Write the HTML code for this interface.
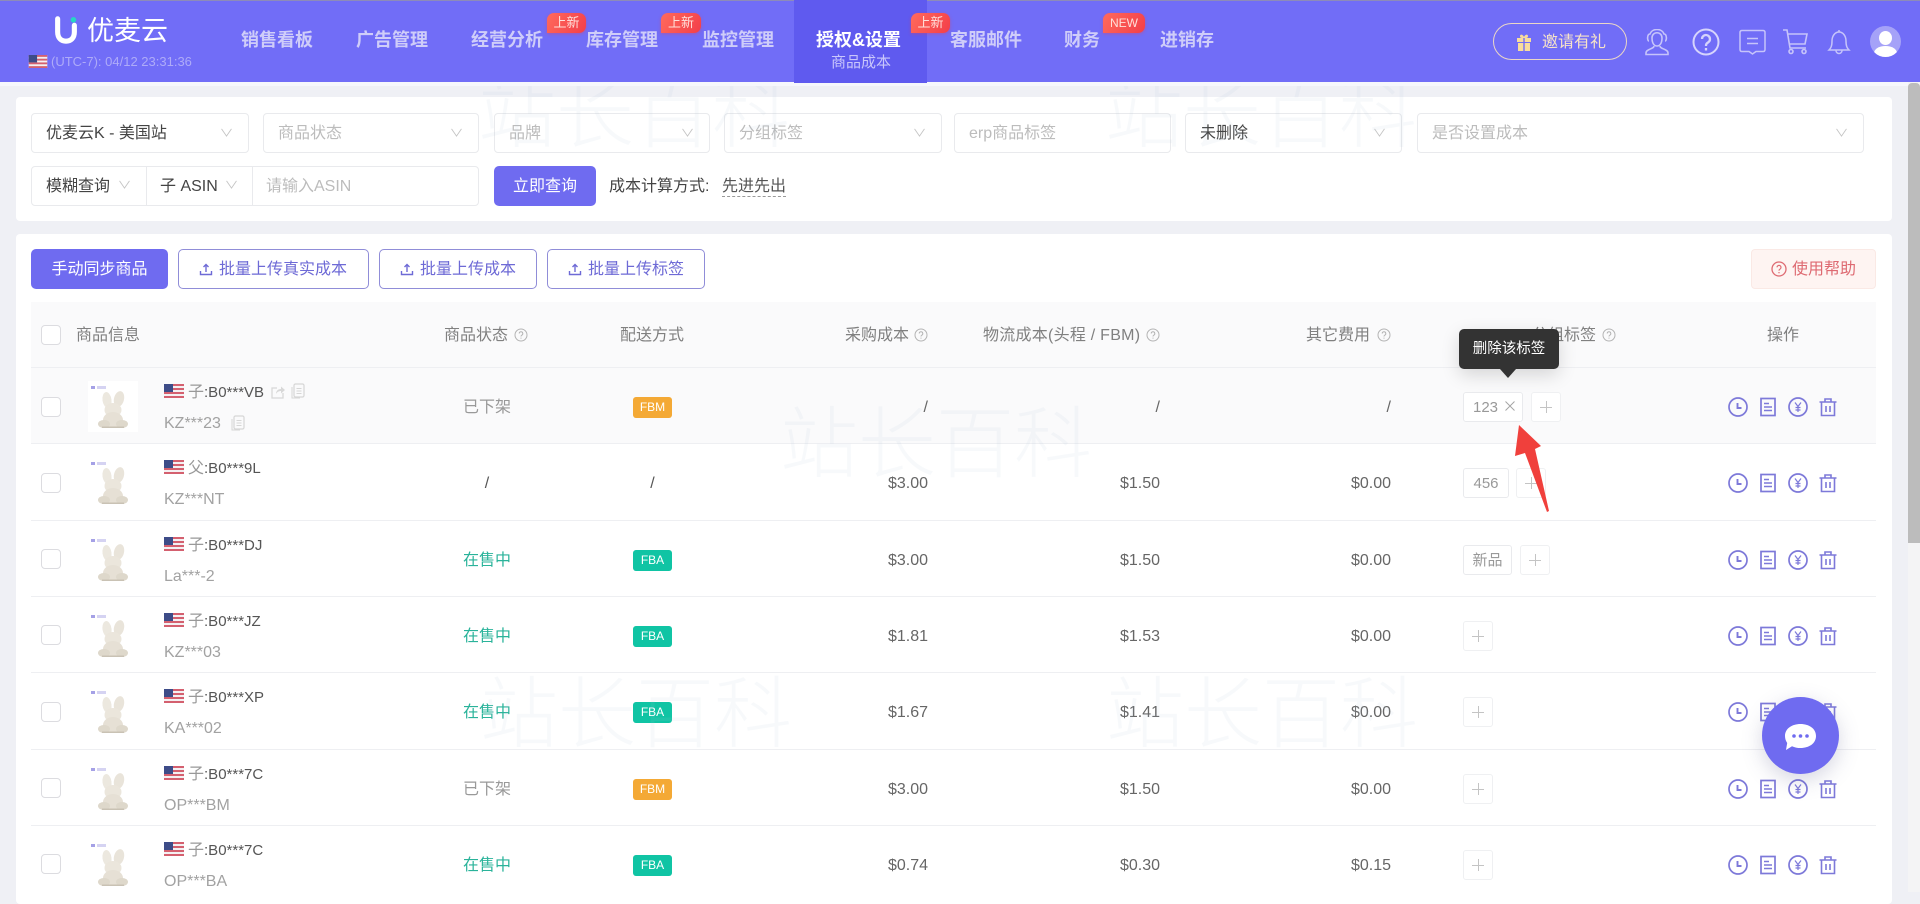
<!DOCTYPE html>
<html lang="zh-CN"><head><meta charset="utf-8"><title>优麦云 商品成本</title>
<style>
*{box-sizing:border-box;margin:0;padding:0}
html,body{width:1920px;height:892px;overflow:hidden;background:#eff0f5;font-family:"Liberation Sans","Noto Sans CJK SC",sans-serif;font-size:16px;color:#555}
.abs,.t,.s,.r,.r>*{position:absolute}
.t{white-space:nowrap;line-height:24px;height:24px}
#hd{position:absolute;left:0;top:0;width:1920px;height:82px;background:#716df7;border-top:1px solid #8d8bb8;z-index:5}
#hdx{position:absolute;left:0;top:82px;width:1920px;height:4px;background:#f6f7fc;z-index:4}
.nv{position:absolute;top:27px;line-height:24px;font-size:18px;font-weight:700;color:#cfcdf9;white-space:nowrap}
.bd{position:absolute;top:12px;height:20px;line-height:20px;text-align:center;color:#ffe0da;font-size:13px;background:linear-gradient(120deg,#ff6a5c,#f33e49);border-radius:7px 7px 7px 0;box-shadow:0 1px 3px rgba(240,60,70,.4)}
.card{position:absolute;background:#fff;left:16px;width:1876px;border-radius:4px}
.s{height:40px;top:113px;background:#fff;border:1px solid #e9eaed;border-radius:4px;line-height:40px;padding-left:14px;color:#bcbcbc;white-space:nowrap}
.s.v{color:#444}
.s svg,.chev{position:absolute;width:13px;height:9px;right:15px;top:14px}
.btn{position:absolute;top:249px;height:40px;border:1px solid #908dd8;border-radius:5px;background:#fff;color:#6e6ad6;line-height:40px;white-space:nowrap;padding-left:40px}
.btn svg{position:absolute;left:20px;top:12px;width:14px;height:14px}
.r{left:31px;width:1845px;height:76px;border-bottom:1px solid #eeeff2}
.r.h{background:#fafafb}
.cb{left:10px;top:29px;width:20px;height:20px;border:1px solid #dcdce0;border-radius:4px;background:#fff}
.img{left:57px;top:13px;width:50px;height:51px;background:#fff}
.r:not(.h) .img{background:transparent}
.fl{left:133px;top:16px;width:20px;height:14px}
.a{left:157px;top:13px;line-height:24px;white-space:nowrap;color:#555;font-size:15px}
.a b{font-weight:400;color:#999;font-size:16px}
.b{left:133px;top:44px;line-height:24px;white-space:nowrap;color:#a2a2a2;font-size:16px}
.st{left:406px;width:100px;top:28px;line-height:24px;text-align:center;color:#999}
.st.g{color:#2ab39a}
.st.n{color:#555}
.bg{left:602px;top:29px;width:39px;height:21px;line-height:21px;text-align:center;color:#fff;font-size:12px;border-radius:3px}
.fba{background:#10c4a4}.fbm{background:#f4a935}
.sl{left:602px;width:39px;top:28px;line-height:24px;text-align:center;color:#555}
.p{top:28px;width:200px;line-height:24px;text-align:right;color:#666}
.p1{left:697px}.p2{left:929px}.p3{left:1160px}
.tg{top:24px;height:30px;line-height:29px;border:1px solid #e9eaed;border-radius:3px;background:#fff;color:#999;font-size:15px;text-align:center}
.pl{top:24px;width:30px;height:30px;border:1px solid #eff0f2;border-radius:3px;background:#fff}
.pl:before{content:"";position:absolute;left:8px;top:13.5px;width:12px;height:1px;background:#c4c4c4}
.pl:after{content:"";position:absolute;left:13.5px;top:8px;width:1px;height:12px;background:#c4c4c4}
.ic{top:29px;width:20px;height:20px}
.i1{left:1697px}.i2{left:1727px}.i3{left:1757px}.i4{left:1787px}
.th{color:#808080;top:324px!important}
.q{position:absolute;width:14px;height:14px;top:328px}
.wm{position:absolute;font-family:"Noto Sans CJK SC","WenQuanYi Zen Hei",sans-serif;font-weight:300;font-size:78px;line-height:80px;height:80px;width:320px;letter-spacing:0;color:rgba(175,198,215,.10);white-space:nowrap;z-index:3;pointer-events:none}
</style></head><body>
<svg width="0" height="0" style="position:absolute"><defs>
<symbol id="flag" viewBox="0 0 20 14"><rect width="20" height="14" fill="#f4f0f2"/><rect y="0" width="20" height="2" fill="#d4606f"/><rect y="4" width="20" height="2" fill="#d4606f"/><rect y="8" width="20" height="2" fill="#d4606f"/><rect y="12" width="20" height="2" fill="#d4606f"/><rect width="9" height="8" fill="#3d4c88"/></symbol>
<symbol id="bun" viewBox="0 0 50 51"><rect x="3" y="5" width="4" height="3" fill="#a5a1e6"/><rect x="9" y="5" width="9" height="3" fill="#d5d3f2"/><ellipse cx="19" cy="19" rx="4.500" ry="8" fill="#ece8df" transform="rotate(-8 19 19)"/><ellipse cx="31" cy="18" rx="5" ry="8" fill="#e9e4da" transform="rotate(14 31 18)"/><ellipse cx="25" cy="29" rx="8.500" ry="7" fill="#ebe6dc"/><ellipse cx="25" cy="39" rx="10" ry="8" fill="#e6e0d5"/><ellipse cx="16" cy="43" rx="6" ry="4" fill="#ded8cb"/><ellipse cx="34" cy="43" rx="6" ry="4" fill="#ded8cb"/><rect x="14" y="45.500" width="22" height="1.500" fill="#c9c2b4"/></symbol>
<symbol id="clk" viewBox="0 0 20 20"><circle cx="10" cy="10" r="9" fill="none" stroke="#7d79d9" stroke-width="1.700"/><path d="M9.500 6v5h4" fill="none" stroke="#7d79d9" stroke-width="1.900"/></symbol>
<symbol id="doc" viewBox="0 0 20 20"><rect x="3" y="1.500" width="14" height="17" fill="none" stroke="#7d79d9" stroke-width="1.700"/><path d="M6 6.500h5M6 10h8M6 13.500h8" fill="none" stroke="#7d79d9" stroke-width="1.400"/></symbol>
<symbol id="yen" viewBox="0 0 20 20"><circle cx="10" cy="10" r="9" fill="none" stroke="#7d79d9" stroke-width="1.700"/><path d="M7 5.500L10 9.500l3-4M10 9.500V15M7.500 10.500h5M7.500 13h5" fill="none" stroke="#7d79d9" stroke-width="1.200"/></symbol>
<symbol id="tr" viewBox="0 0 20 20"><path d="M1.500 5h17M7 5V2h6V5M3.500 5v13.500h13V5M8 9v6M12 9v6" fill="none" stroke="#7d79d9" stroke-width="1.600"/></symbol>
<symbol id="qm" viewBox="0 0 14 14"><circle cx="7" cy="7" r="6" fill="none" stroke="#b4b4b4" stroke-width="1"/><path d="M5.200 5.500a1.800 1.800 0 1 1 2.600 1.700c-.6.300-.8.600-.8 1.300M7 9.600v1" fill="none" stroke="#b4b4b4" stroke-width="1"/></symbol>
<symbol id="ch" viewBox="0 0 14 10"><path d="M1.500 1L7 9l5.500-8" fill="none" stroke="#c4c4c4" stroke-width="1"/></symbol>
<symbol id="up" viewBox="0 0 14 14"><path d="M1.500 9v3.500h11V9M7 10V2.500M4.500 5L7 2.500 9.500 5" fill="none" stroke="#6e6ad6" stroke-width="1.400"/></symbol>
<symbol id="cp" viewBox="0 0 16 16"><rect x="4" y="1" width="10" height="13" rx="1.500" fill="none" stroke="#d6d6d6" stroke-width="1.200"/><path d="M2 4v11h8M6.500 5.500h5M6.500 8h5M6.500 10.500h5" fill="none" stroke="#d6d6d6" stroke-width="1"/></symbol>
</defs></svg>

<!-- header -->
<div id="hd">
<svg class="abs" style="left:53px;top:14px;width:26px;height:30px" viewBox="0 0 28 30"><path d="M5 3v14c0 7 4 10 9 10s9-3 9-10V10" fill="none" stroke="#fff" stroke-width="5.500" stroke-linecap="round"/><circle cx="22" cy="4" r="3" fill="#25d6c3"/></svg>
<div class="abs" style="left:87px;top:12px;font-size:27px;line-height:36px;color:#fff;white-space:nowrap">优麦云</div>
<svg class="abs" style="left:28px;top:54px;width:20px;height:13px"><use href="#flag"/></svg>
<div class="abs" style="left:51px;top:52px;font-size:13px;line-height:18px;color:#aeabf8;white-space:nowrap">(UTC-7): 04/12 23:31:36</div>
<div class="abs" style="left:794px;top:-1px;width:133px;height:83px;background:#5f5aef"></div>
<span class="nv" style="left:241px">销售看板</span>
<span class="nv" style="left:356px">广告管理</span>
<span class="nv" style="left:471px">经营分析</span>
<span class="nv" style="left:586px">库存管理</span>
<span class="nv" style="left:702px">监控管理</span>
<span class="nv" style="left:816px;color:#fff;font-weight:700">授权&amp;设置</span>
<span class="abs" style="left:831px;top:51px;font-size:15px;line-height:22px;color:#c9c6fb;white-space:nowrap">商品成本</span>
<span class="nv" style="left:950px">客服邮件</span>
<span class="nv" style="left:1064px">财务</span>
<span class="nv" style="left:1160px">进销存</span>
<span class="bd" style="left:547px;width:39px">上新</span>
<span class="bd" style="left:661px;width:40px">上新</span>
<span class="bd" style="left:911px;width:39px">上新</span>
<span class="bd" style="left:1103px;width:42px;font-size:12px">NEW</span>
<div class="abs" style="left:1493px;top:22px;width:134px;height:37px;border:1px solid #ebd7c6;border-radius:19px"></div>
<svg class="abs" style="left:1515px;top:32px;width:18px;height:18px" viewBox="0 0 18 18"><path d="M5 3.500c0-3 3-2 4 .5 1-2.500 4-3.500 4-.5 0 1-1 1.500-2 1.500H7C6 5 5 4.500 5 3.500z" fill="#f8dc9c"/><rect x="2" y="5" width="14" height="4" fill="#f8dc9c"/><rect x="3" y="10" width="12" height="8" fill="#f8dc9c"/><rect x="8.300" y="5" width="1.400" height="13" fill="#716df7"/></svg>
<span class="abs" style="left:1542px;top:30px;font-size:16px;line-height:24px;color:#f7e3c8;white-space:nowrap">邀请有礼</span>
<svg class="abs" style="left:1644px;top:28px;width:26px;height:27px" viewBox="0 0 26 27" fill="none" stroke="#c6c4fa" stroke-width="1.600"><path d="M5 12c-2 0-2-7 1-7 2-6 12-6 14 0 3 0 3 7 1 7"/><path d="M8 9c0-7 10-7 10 0 0 5-2 8-5 8s-5-3-5-8z"/><path d="M10 17c0 3-8 3-8 7v1.500h22V24c0-4-8-4-8-7"/></svg>
<svg class="abs" style="left:1692px;top:27px;width:28px;height:28px" viewBox="0 0 28 28" fill="none" stroke="#d6d4fc" stroke-width="2"><circle cx="14" cy="14" r="12.500"/><path d="M10 11a4 4 0 1 1 6 3.500c-1.500 1-2 1.500-2 3.500M14 20v2.500" stroke-width="2.300"/></svg>
<svg class="abs" style="left:1739px;top:28px;width:27px;height:26px" viewBox="0 0 27 26" fill="none" stroke="#c6c4fa" stroke-width="1.500"><path d="M3 1.500h21q2 0 2 2v17q0 2-2 2h-7l-3.500 2.500-3.500-2.500H3q-2 0-2-2v-17q0-2 2-2z"/><path d="M8 9.500h11M8 14.500h11"/></svg>
<svg class="abs" style="left:1782px;top:27px;width:27px;height:27px" viewBox="0 0 27 27" fill="none" stroke="#c6c4fa" stroke-width="1.600"><path d="M1 2h4l3 18h16M6 6h19l-2 10H7.500"/><circle cx="9" cy="23.500" r="2"/><circle cx="22" cy="23.500" r="2"/></svg>
<svg class="abs" style="left:1827px;top:28px;width:24px;height:26px" viewBox="0 0 24 26" fill="none" stroke="#c6c4fa" stroke-width="1.500"><path d="M2 21c2-2 3-4 3-9 0-5 3-9 7-9s7 4 7 9c0 5 1 7 3 9z"/><path d="M9 21.500a3 3 0 0 0 6 0M12 1v2"/></svg>
<div class="abs" style="left:1870px;top:25px;width:31px;height:31px;border-radius:50%;background:#a5a2f8;overflow:hidden"><div class="abs" style="left:9px;top:5px;width:13px;height:14px;border-radius:50%;background:#fff"></div><div class="abs" style="left:4px;top:20px;width:23px;height:14px;border-radius:50%;background:#fff"></div></div>
</div>
<div id="hdx"></div>

<!-- watermarks -->
<div class="wm" style="left:478px;top:68px">站长百科</div>
<div class="wm" style="left:1105px;top:68px">站长百科</div>
<div class="wm" style="left:780px;top:398px">站长百科</div>
<div class="wm" style="left:480px;top:668px">站长百科</div>
<div class="wm" style="left:1106px;top:668px">站长百科</div>

<!-- filter card -->
<div class="card" style="top:97px;height:124px"></div>
<div class="s v" style="left:31px;width:218px">优麦云K - 美国站<svg><use href="#ch"/></svg></div>
<div class="s" style="left:263px;width:216px">商品状态<svg><use href="#ch"/></svg></div>
<div class="s" style="left:494px;width:216px">品牌<svg><use href="#ch"/></svg></div>
<div class="s" style="left:724px;width:218px">分组标签<svg><use href="#ch"/></svg></div>
<div class="s" style="left:954px;width:217px">erp商品标签</div>
<div class="s v" style="left:1185px;width:217px">未删除<svg><use href="#ch"/></svg></div>
<div class="s" style="left:1417px;width:447px">是否设置成本<svg><use href="#ch"/></svg></div>
<div class="s v" style="left:31px;width:448px;top:166px"></div>
<span class="t" style="left:46px;top:175px;color:#444">模糊查询</span>
<svg class="chev" style="left:118px;top:180px;right:auto"><use href="#ch"/></svg>
<div class="abs" style="left:146px;top:166px;width:1px;height:40px;background:#e9eaed"></div>
<span class="t" style="left:160px;top:175px;color:#444">子 ASIN</span>
<svg class="chev" style="left:225px;top:180px;right:auto"><use href="#ch"/></svg>
<div class="abs" style="left:252px;top:166px;width:1px;height:40px;background:#e9eaed"></div>
<span class="t" style="left:266px;top:175px;color:#bcbcbc">请输入ASIN</span>
<div class="abs" style="left:494px;top:166px;width:102px;height:40px;border-radius:5px;background:#6f6bf0;color:#fff;line-height:41px;text-align:center">立即查询</div>
<span class="t" style="left:609px;top:175px;color:#444">成本计算方式:</span>
<span class="t" style="left:722px;top:175px;color:#555;height:22px;border-bottom:1px dashed #999">先进先出</span>

<!-- table card -->
<div class="card" style="top:234px;height:670px"></div>
<div class="abs" style="left:31px;top:249px;width:137px;height:40px;border-radius:5px;background:#6f6bf0;color:#fff;line-height:41px;text-align:center">手动同步商品</div>
<div class="btn" style="left:178px;width:191px"><svg><use href="#up"/></svg>批量上传真实成本</div>
<div class="btn" style="left:379px;width:158px"><svg><use href="#up"/></svg>批量上传成本</div>
<div class="btn" style="left:547px;width:158px"><svg><use href="#up"/></svg>批量上传标签</div>
<div class="abs" style="left:1751px;top:249px;width:125px;height:40px;border-radius:4px;background:#fef4f2;border:1px solid #fae9e5;color:#de6a72;line-height:39px;padding-left:40px;white-space:nowrap;font-size:16px"><svg class="abs" style="left:19px;top:11px;width:16px;height:16px" viewBox="0 0 16 16"><circle cx="8" cy="8" r="7" fill="none" stroke="#de6a72" stroke-width="1.300"/><path d="M6 6.300a2 2 0 1 1 3 1.800c-.8.400-1 .8-1 1.500M8 11v1.300" fill="none" stroke="#de6a72" stroke-width="1.200"/></svg>使用帮助</div>

<!-- table head -->
<div class="abs" style="left:31px;top:302px;width:1845px;height:66px;background:#fafafb;border-bottom:1px solid #eeeff2"></div>
<div class="abs" style="left:41px;top:325px;width:20px;height:20px;border:1px solid #dcdce0;border-radius:4px;background:#fff"></div>
<span class="t th" style="left:76px">商品信息</span>
<span class="t th" style="left:444px">商品状态</span><svg class="q" style="left:514px"><use href="#qm"/></svg>
<span class="t th" style="left:620px">配送方式</span>
<span class="t th" style="left:845px">采购成本</span><svg class="q" style="left:914px"><use href="#qm"/></svg>
<span class="t th" style="left:983px;letter-spacing:.25px">物流成本(头程 / FBM)</span><svg class="q" style="left:1146px"><use href="#qm"/></svg>
<span class="t th" style="left:1306px">其它费用</span><svg class="q" style="left:1377px"><use href="#qm"/></svg>
<span class="t th" style="left:1532px">分组标签</span><svg class="q" style="left:1602px"><use href="#qm"/></svg>
<span class="t th" style="left:1767px">操作</span>

<!-- rows -->
<div class="r h" style="top:368px"><i class="cb"></i><svg class="img"><use href="#bun"/></svg><svg class="fl"><use href="#flag"/></svg><span class="a"><b>子</b>:B0***VB</span><span class="b">KZ***23</span>
<svg style="left:240px;top:17px;width:14px;height:14px" viewBox="0 0 14 14"><path d="M12 8v5H1V3h5" fill="none" stroke="#d8d8d8" stroke-width="1.300"/><path d="M5 9c0-3 2-5 5-5V1.500L14 5l-4 3.500V6C8 6 6 7 5 9z" fill="#d8d8d8"/></svg><svg style="left:259px;top:15px;width:16px;height:16px"><use href="#cp"/></svg><svg style="left:199px;top:47px;width:16px;height:16px"><use href="#cp"/></svg>
<span class="st">已下架</span><span class="bg fbm">FBM</span><span class="p p1">/</span><span class="p p2">/</span><span class="p p3">/</span>
<span class="tg" style="left:1432px;width:60px;text-align:left;padding-left:9px">123</span><svg style="left:1473px;top:32px;width:12px;height:12px" viewBox="0 0 12 12"><path d="M1.500 1.500l9 9M10.500 1.500l-9 9" stroke="#a5a5a5" fill="none"/></svg><span class="pl" style="left:1500px"></span>
<svg class="ic i1"><use href="#clk"/></svg><svg class="ic i2"><use href="#doc"/></svg><svg class="ic i3"><use href="#yen"/></svg><svg class="ic i4"><use href="#tr"/></svg></div>

<div class="r" style="top:444px;height:77px"><i class="cb"></i><svg class="img"><use href="#bun"/></svg><svg class="fl"><use href="#flag"/></svg><span class="a"><b>父</b>:B0***9L</span><span class="b">KZ***NT</span>
<span class="st n">/</span><span class="sl">/</span><span class="p p1">$3.00</span><span class="p p2">$1.50</span><span class="p p3">$0.00</span>
<span class="tg" style="left:1432px;width:46px">456</span><span class="pl" style="left:1485px"></span>
<svg class="ic i1"><use href="#clk"/></svg><svg class="ic i2"><use href="#doc"/></svg><svg class="ic i3"><use href="#yen"/></svg><svg class="ic i4"><use href="#tr"/></svg></div>

<div class="r" style="top:521px"><i class="cb" style="top:28px"></i><svg class="img"><use href="#bun"/></svg><svg class="fl"><use href="#flag"/></svg><span class="a"><b>子</b>:B0***DJ</span><span class="b">La***-2</span>
<span class="st g">在售中</span><span class="bg fba">FBA</span><span class="p p1">$3.00</span><span class="p p2">$1.50</span><span class="p p3">$0.00</span>
<span class="tg" style="left:1432px;width:49px">新品</span><span class="pl" style="left:1489px"></span>
<svg class="ic i1"><use href="#clk"/></svg><svg class="ic i2"><use href="#doc"/></svg><svg class="ic i3"><use href="#yen"/></svg><svg class="ic i4"><use href="#tr"/></svg></div>

<div class="r" style="top:597px"><i class="cb" style="top:28px"></i><svg class="img"><use href="#bun"/></svg><svg class="fl"><use href="#flag"/></svg><span class="a"><b>子</b>:B0***JZ</span><span class="b">KZ***03</span>
<span class="st g">在售中</span><span class="bg fba">FBA</span><span class="p p1">$1.81</span><span class="p p2">$1.53</span><span class="p p3">$0.00</span>
<span class="pl" style="left:1432px"></span>
<svg class="ic i1"><use href="#clk"/></svg><svg class="ic i2"><use href="#doc"/></svg><svg class="ic i3"><use href="#yen"/></svg><svg class="ic i4"><use href="#tr"/></svg></div>

<div class="r" style="top:673px;height:77px"><i class="cb"></i><svg class="img"><use href="#bun"/></svg><svg class="fl"><use href="#flag"/></svg><span class="a"><b>子</b>:B0***XP</span><span class="b">KA***02</span>
<span class="st g">在售中</span><span class="bg fba">FBA</span><span class="p p1">$1.67</span><span class="p p2">$1.41</span><span class="p p3">$0.00</span>
<span class="pl" style="left:1432px"></span>
<svg class="ic i1"><use href="#clk"/></svg><svg class="ic i2"><use href="#doc"/></svg><svg class="ic i3"><use href="#yen"/></svg><svg class="ic i4"><use href="#tr"/></svg></div>

<div class="r" style="top:750px"><i class="cb" style="top:28px"></i><svg class="img"><use href="#bun"/></svg><svg class="fl"><use href="#flag"/></svg><span class="a"><b>子</b>:B0***7C</span><span class="b">OP***BM</span>
<span class="st">已下架</span><span class="bg fbm">FBM</span><span class="p p1">$3.00</span><span class="p p2">$1.50</span><span class="p p3">$0.00</span>
<span class="pl" style="left:1432px"></span>
<svg class="ic i1"><use href="#clk"/></svg><svg class="ic i2"><use href="#doc"/></svg><svg class="ic i3"><use href="#yen"/></svg><svg class="ic i4"><use href="#tr"/></svg></div>

<div class="r" style="top:826px;border-bottom:0;height:66px;overflow:visible"><i class="cb" style="top:28px"></i><svg class="img"><use href="#bun"/></svg><svg class="fl"><use href="#flag"/></svg><span class="a"><b>子</b>:B0***7C</span><span class="b">OP***BA</span>
<span class="st g">在售中</span><span class="bg fba">FBA</span><span class="p p1">$0.74</span><span class="p p2">$0.30</span><span class="p p3">$0.15</span>
<span class="pl" style="left:1432px"></span>
<svg class="ic i1"><use href="#clk"/></svg><svg class="ic i2"><use href="#doc"/></svg><svg class="ic i3"><use href="#yen"/></svg><svg class="ic i4"><use href="#tr"/></svg></div>

<!-- tooltip -->
<div class="abs" style="left:1459px;top:329px;width:100px;height:40px;background:#333;border-radius:5px;color:#fff;font-size:14.500px;line-height:41px;text-align:center;box-shadow:0 6px 18px rgba(0,0,0,.15);z-index:6">删除该标签</div>
<div class="abs" style="left:1500px;top:369px;width:0;height:0;border:8px solid transparent;border-top:9px solid #333;border-bottom:0;z-index:6"></div>

<!-- red arrow -->
<svg class="abs" style="left:1500px;top:415px;width:60px;height:105px;z-index:7" viewBox="1500 415 60 105"><polygon points="1519,425 1541,446 1535,449 1549,511 1547,512 1525,453 1515,456" fill="#f0403c"/></svg>

<!-- chat -->
<div class="abs" style="left:1762px;top:697px;width:77px;height:77px;border-radius:50%;background:#6f6bf0;box-shadow:0 6px 20px rgba(90,90,140,.25);z-index:8"><svg class="abs" style="left:22px;top:26px;width:33px;height:30px" viewBox="0 0 33 30"><path d="M16.500 1C25 1 32 5.500 32 13s-7 12-15.500 12c-3 0-6-.6-8.500-1.800L2 27l1.200-7C1.800 18 1 15.500 1 13 1 5.500 8 1 16.500 1z" fill="#fff"/><circle cx="10" cy="13" r="1.800" fill="#6f6bf0"/><circle cx="16.500" cy="13" r="1.800" fill="#6f6bf0"/><circle cx="23" cy="13" r="1.800" fill="#6f6bf0"/></svg></div>

<!-- scrollbar -->
<div class="abs" style="left:1908px;top:82px;width:12px;height:810px;background:#f4f4f5;z-index:6"></div>
<div class="abs" style="left:1908px;top:83px;width:12px;height:460px;background:#bcbcbc;border-radius:4px 4px 0 0;z-index:6"></div>
</body></html>
